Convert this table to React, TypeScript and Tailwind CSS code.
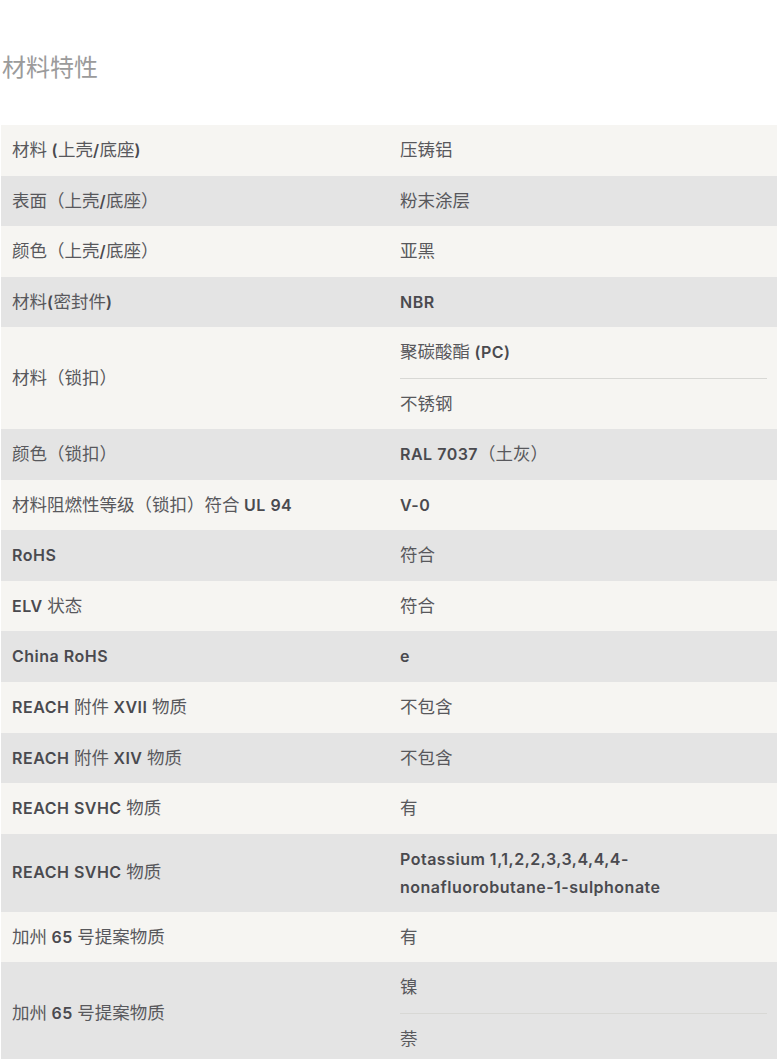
import React from "react";

interface Row {
  label: string;
  values: string[];
}

const rows: Row[] = [
  { label: "材料 (上壳/底座)", values: ["压铸铝"] },
  { label: "表面（上壳/底座）", values: ["粉末涂层"] },
  { label: "颜色（上壳/底座）", values: ["亚黑"] },
  { label: "材料(密封件)", values: ["NBR"] },
  { label: "材料（锁扣）", values: ["聚碳酸酯 (PC)", "不锈钢"] },
  { label: "颜色（锁扣）", values: ["RAL 7037（土灰）"] },
  { label: "材料阻燃性等级（锁扣）符合 UL 94", values: ["V-0"] },
  { label: "RoHS", values: ["符合"] },
  { label: "ELV 状态", values: ["符合"] },
  { label: "China RoHS", values: ["e"] },
  { label: "REACH 附件 XVII 物质", values: ["不包含"] },
  { label: "REACH 附件 XIV 物质", values: ["不包含"] },
  { label: "REACH SVHC 物质", values: ["有"] },
  { label: "REACH SVHC 物质", values: ["Potassium 1,1,2,2,3,3,4,4,4-nonafluorobutane-1-sulphonate"] },
  { label: "加州 65 号提案物质", values: ["有"] },
  { label: "加州 65 号提案物质", values: ["镍", "萘"] },
];

// latin runs get the heavier sans, CJK stays thin
function Mixed({ text }: { text: string }) {
  const parts = text.split(/([\u3000-\u9fff\uff00-\uffef]+)/).filter((p) => p !== "");
  return (
    <>
      {parts.map((p, i) =>
        /[\u3000-\u9fff\uff00-\uffef]/.test(p) ? (
          <span key={i} className="text-[17.5px] font-normal text-[#58585c]">
            {p}
          </span>
        ) : (
          <span key={i} className="text-[16px] font-semibold tracking-[0.5px] text-[#4a4a4f]">
            {p}
          </span>
        )
      )}
    </>
  );
}

export default function App() {
  return (
    <div
      className="w-[777px] min-h-[1059px] bg-white"
      style={{ fontFamily: 'Inter, "Noto Sans CJK SC", sans-serif' }}
    >
      <h2 className="pl-[2px] pt-[50px] pb-[39px] text-[24px] leading-[36px] font-normal text-[#9b9b9b]">
        材料特性
      </h2>

      <div className="ml-[1px] flex flex-col">
        {rows.map((row, i) => (
          <div
            key={i}
            className={`grid grid-cols-2 ${i % 2 === 0 ? "bg-[#f6f5f2]" : "bg-[#e4e4e4]"}`}
          >
            <div className="flex items-center pl-[11px] pr-[10px] py-[11px] leading-[28.6px]">
              <div>
                <Mixed text={row.label} />
              </div>
            </div>
            <div className="flex flex-col pl-[11px] pr-[10px]">
              {row.values.map((v, j) => (
                <div
                  key={j}
                  className={`py-[11px] leading-[28px] min-h-[50.6px] ${
                    j > 0 ? "border-t border-[#d8d8d5]" : ""
                  }`}
                >
                  <Mixed text={v} />
                </div>
              ))}
            </div>
          </div>
        ))}
      </div>
    </div>
  );
}
